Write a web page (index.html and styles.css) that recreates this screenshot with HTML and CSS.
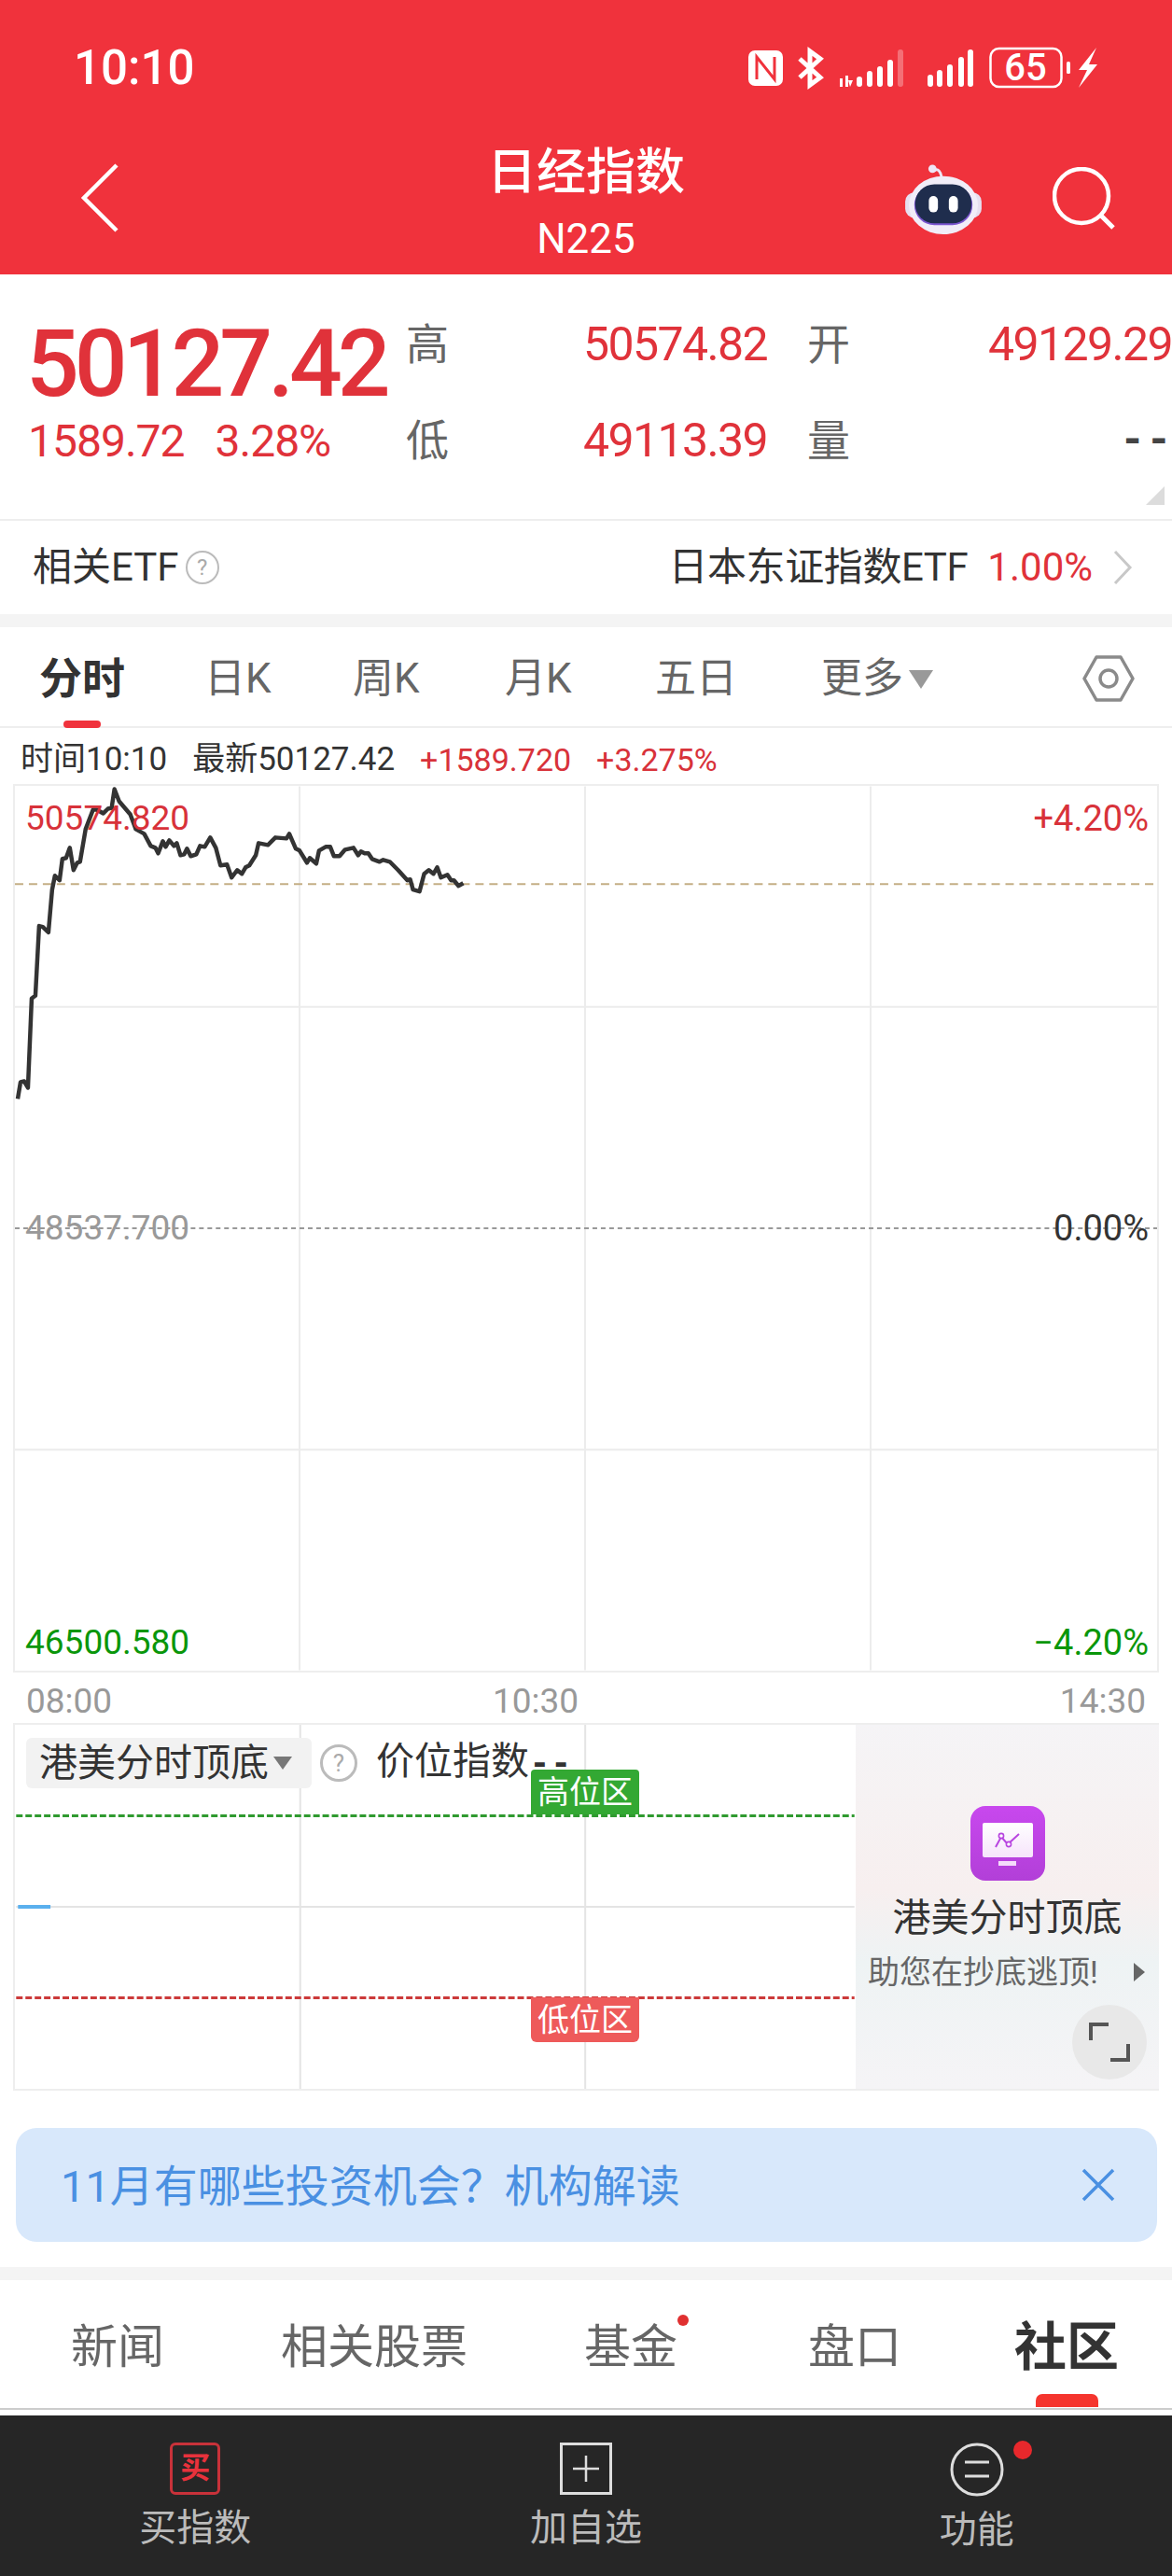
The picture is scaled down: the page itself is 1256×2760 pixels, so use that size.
FILE: index.html
```html
<!doctype html>
<html lang="zh-CN">
  <head>
    <meta charset="UTF-8" />
    <meta name="viewport" content="width=device-width, initial-scale=1.0" />
    <title>日经指数</title>
    <link rel="stylesheet" href="styles.css">
  </head>
  <body>
    <header class="top">
      <div class="status">
        <span class="clock">10:10</span>
        <svg class="status-icons" width="380" height="48" viewBox="800 48 380 48" fill="#fff">
          <!-- nfc -->
          <rect x="802" y="53" width="37" height="38" rx="7"/>
          <path d="M811 84V60L830 84V60" fill="none" stroke="#f0323c" stroke-width="3"/>
          <!-- bluetooth -->
          <path d="M857 62L879 82L868 90V54L879 62L857 82" fill="none" stroke="#fff" stroke-width="5"/>
          <!-- sim 1 -->
          <rect x="900" y="83" width="3" height="9"/><rect x="906" y="80" width="3" height="12"/><path d="M909 85h5l-3 7z"/>
          <rect x="918" y="81" width="6" height="11" rx="3"/>
          <rect x="929" y="75" width="6" height="17" rx="3"/>
          <rect x="940" y="70" width="6" height="22" rx="3"/>
          <rect x="951" y="63" width="6" height="29" rx="3"/>
          <rect x="962" y="52" width="6" height="40" rx="3" opacity=".3"/>
          <!-- sim 2 -->
          <rect x="994" y="79" width="6" height="13" rx="3"/>
          <rect x="1004" y="74" width="6" height="18" rx="3"/>
          <rect x="1015" y="68" width="6" height="24" rx="3"/>
          <rect x="1027" y="60" width="6" height="32" rx="3"/>
          <rect x="1037" y="52" width="6" height="40" rx="3"/>
          <!-- battery -->
          <rect x="1061.500" y="51" width="76" height="41" rx="9" fill="none" stroke="#fff" stroke-width="2.500"/>
          <text x="1099" y="85" class="battery-num" text-anchor="middle">65</text>
          <rect x="1143" y="65" width="4" height="13" rx="1.500"/>
          <path d="M1175 50L1156 74H1165L1156 93L1176 68H1167Z"/>
        </svg>
      </div>
      <nav class="nav">
        <svg class="back" width="44" height="76" viewBox="0 0 44 76"><path d="M40 3L5 38L40 73" fill="none" stroke="#fff" stroke-width="4.500"/></svg>
        <div class="title">
          <h1>日经指数</h1>
          <p>N225</p>
        </div>
        <div class="nav-right">
          <svg width="82" height="76" viewBox="0 0 84 78">
            <path d="M32 8c4-3 7 1 8 7" fill="none" stroke="#eee6f6" stroke-width="3"/>
            <circle cx="30" cy="6" r="4.500" fill="#eee6f6"/>
            <rect x="0" y="32" width="84" height="28" rx="10" fill="#e6dff0"/>
            <ellipse cx="42" cy="46" rx="38" ry="32" fill="#f1edf8"/>
            <rect x="10" y="24" width="64" height="44" rx="22" fill="#7a55cf"/>
            <rect x="11" y="23" width="62" height="43" rx="21" fill="#1f2d4d"/>
            <rect x="26" y="36" width="10" height="18" rx="5" fill="#fff"/>
            <rect x="48" y="36" width="10" height="18" rx="5" fill="#fff"/>
          </svg>
          <svg width="68" height="68" viewBox="0 0 68 68"><circle cx="31" cy="31" r="29" fill="none" stroke="#fff" stroke-width="4.500"/><path d="M52 52L65 65" stroke="#fff" stroke-width="5"/></svg>
        </div>
      </nav>
    </header>

    <section class="quote">
      <div class="price">
        <div class="price-big">50127.42</div>
        <div class="price-change"><span>1589.72</span><span>3.28%</span></div>
      </div>
      <dl class="stats">
        <dt>高</dt><dd>50574.82</dd>
        <dt>开</dt><dd>49129.29</dd>
        <dt>低</dt><dd>49113.39</dd>
        <dt>量</dt><dd class="stat-none">--</dd>
      </dl>
      <span class="corner"></span>
    </section>

    <section class="etf">
      <div class="etf-left">相关ETF<span class="help">?</span></div>
      <div class="etf-right">
        <span class="etf-name">日本东证指数ETF</span>
        <span class="etf-pct">1.00%</span>
        <svg width="22" height="38" viewBox="0 0 22 38"><path d="M3 2L19 19L3 36" fill="none" stroke="#c8c8c8" stroke-width="3"/></svg>
      </div>
    </section>

    <section class="periods">
      <span class="period active">分时</span>
      <span class="period">日K</span>
      <span class="period">周K</span>
      <span class="period">月K</span>
      <span class="period">五日</span>
      <span class="period">更多<i class="more-arrow"></i></span>
      <svg width="56" height="52" viewBox="0 0 56 52"><path d="M15 3H41L54 26L41 49H15L2 26Z" fill="none" stroke="#8a8a8a" stroke-width="3.500" stroke-linejoin="round"/><circle cx="28" cy="26" r="9" fill="none" stroke="#8a8a8a" stroke-width="3.500"/></svg>
    </section>

    <div class="info">
      <span>时间10:10</span>
      <span>最新50127.42</span>
      <span class="up">+1589.720</span>
      <span class="up">+3.275%</span>
    </div>

    <section class="chart">
      <svg class="plot" viewBox="14 842 1228 950">
        <g stroke="#ececec" stroke-width="2" fill="none">
          <path d="M320 842V1792M627 842V1792M934 842V1792"/>
          <path d="M14 1079H1242M14 1555H1242"/>
        </g>
        <path d="M14 1317H1242" stroke="#999" stroke-width="2" stroke-dasharray="5 4"/>
        <path d="M14 947H1242" stroke="#c4ae85" stroke-width="2" stroke-dasharray="9 6"/>
        <polyline fill="none" stroke="#333" stroke-width="4.500" stroke-linejoin="round" points="17,1178 20,1160 24,1159 28,1166 32,1070 36,1067 40,992 44,993 50,999 54,953 57,938 62,943 65,920 69,919 73,908 77,932 81,924 84,923 90,888 98,867 102,867 109,871 114,866 118,865 121,845 126,858 138,872 144,888 153,893 160,906 165,908 168,914 173,901 176,907 180,900 185,906 188,903 192,916 196,915 199,909 203,917 209,915 213,906 218,907 224,897 230,908 235,927 242,926 247,940 253,932 258,936 262,929 266,927 273,916 276,903 286,905 294,897 306,898 309,893 316,909 320,911 328,924 331,919 338,925 341,911 348,907 353,907 357,917 363,917 369,910 378,908 383,916 386,912 390,914 394,914 398,920 406,923 410,921 417,923 426,932 436,943 439,942 442,953 449,955 454,936 459,932 464,936 468,929 472,940 479,937 483,943 486,943 491,949 496,946"/>
      </svg>
      <div class="scale">
        <div class="scale-row up"><span>50574.820</span><span>+4.20%</span></div>
        <div class="scale-row"><span class="muted">48537.700</span><span>0.00%</span></div>
        <div class="scale-row down"><span>46500.580</span><span>−4.20%</span></div>
      </div>
    </section>

    <div class="axis"><span>08:00</span><span class="axis-mid">10:30</span><span>14:30</span></div>

    <section class="indicator">
      <div class="ind-plot">
        <svg class="plot" viewBox="14 1848 903 392">
          <path d="M320 1848V2240M627 1848V2240M14 2044H917" stroke="#e4e4e4" stroke-width="2" fill="none"/>
          <path d="M14 1946H917" stroke="#2f9a2f" stroke-width="3" stroke-dasharray="7 3"/>
          <path d="M14 2142H917" stroke="#cc3a3a" stroke-width="3" stroke-dasharray="7 3"/>
          <rect x="16" y="2042" width="35" height="4" fill="#5ab0ee"/>
        </svg>
        <div class="ind-head">
          <span class="chip">港美分时顶底<i class="chip-arrow"></i></span>
          <span class="help help-lg">?</span>
          <span class="ind-name">价位指数<span class="dashes">--</span></span>
        </div>
        <span class="zone zone-high">高位区</span>
        <span class="zone zone-low">低位区</span>
      </div>
      <aside class="promo">
        <div class="promo-icon">
          <div class="screen">
            <svg width="30" height="18" viewBox="0 0 30 18"><path d="M2 16L8 5L15 13L27 2" fill="none" stroke="#b845e0" stroke-width="2"/><circle cx="8" cy="4" r="2.600" fill="#fff" stroke="#b845e0" stroke-width="1.600"/><circle cx="16" cy="13" r="2.600" fill="#fff" stroke="#b845e0" stroke-width="1.600"/></svg>
          </div>
          <div class="stand"></div>
        </div>
        <div class="promo-title">港美分时顶底</div>
        <div class="promo-sub">助您在抄底逃顶!<i class="promo-arrow"></i></div>
        <div class="expand">
          <svg width="44" height="44" viewBox="0 0 44 44"><path d="M2 20V3H21M42 24V41H23" fill="none" stroke="#555" stroke-width="4"/></svg>
        </div>
      </aside>
    </section>

    <div class="banner">
      <span>11月有哪些投资机会？机构解读</span>
      <svg width="36" height="36" viewBox="0 0 36 36"><path d="M2 2L34 34M34 2L2 34" stroke="#4a90e2" stroke-width="3.500"/></svg>
    </div>

    <section class="detail-tabs">
      <span>新闻</span>
      <span>相关股票</span>
      <span class="has-dot">基金<i class="dot"></i></span>
      <span>盘口</span>
      <span class="active">社区</span>
    </section>

    <footer class="bottom">
      <div class="action">
        <span class="buy-icon">买</span>
        <span>买指数</span>
      </div>
      <div class="action">
        <svg width="56" height="56" viewBox="0 0 56 56"><rect x="1.500" y="1.500" width="53" height="53" fill="none" stroke="#ddd" stroke-width="3"/><path d="M28 14V42M14 28H42" stroke="#ddd" stroke-width="2.500"/></svg>
        <span>加自选</span>
      </div>
      <div class="action">
        <span class="menu-wrap">
          <svg width="58" height="58" viewBox="0 0 58 58"><circle cx="29" cy="29" r="27" fill="none" stroke="#ddd" stroke-width="3"/><path d="M16 21H42M16 36H42" stroke="#ddd" stroke-width="3"/></svg>
          <i class="menu-dot"></i>
        </span>
        <span>功能</span>
      </div>
    </footer>
  </body>
</html>
```

FILE: styles.css
```css
* {
    box-sizing: border-box;
    margin: 0;
    padding: 0;
}

body {
    width: 1256px;
    height: 2760px;
    overflow: hidden;
    background: #fff;
    color: #333;
    font-family: Roboto, "Noto Sans CJK SC", sans-serif;
}

i {
    font-style: normal;
}

.up {
    color: #d8323a;
}

.down {
    color: #0a960a;
}

.dashes {
    font-family: "Liberation Mono", monospace;
    font-size: 38px;
    font-weight: 700;
}

/* header */
.top {
    height: 294px;
    background: #f0323c;
    color: #fff;
}

.status {
    height: 146px;
    display: flex;
    justify-content: space-between;
    align-items: center;
    padding: 0 76px 0 79px;
}

.clock {
    font-weight: 500;
    font-size: 51px;
    line-height: 56px;
}

.status-icons {
    display: block;
}

.battery-num {
    font-size: 40px;
    font-weight: 500;
    fill: #fff;
}

.nav {
    height: 148px;
    display: grid;
    grid-template-columns: 1fr auto 1fr;
    align-items: center;
    padding: 0 60px;
}

.title {
    text-align: center;
    padding-bottom: 4px;
}

.title h1 {
    font-size: 53px;
    font-weight: 500;
    line-height: 66px;
    margin-bottom: 10px;
}

.title p {
    font-size: 44px;
    line-height: 56px;
}

.back {
    display: block;
    margin: 0 0 16px 25px;
}

.nav-right {
    display: flex;
    justify-content: flex-end;
    align-items: center;
    gap: 76px;
    margin-bottom: 14px;
}

/* quote */
.quote {
    position: relative;
    height: 262px;
    display: flex;
    padding-left: 28px;
    color: #e0323a;
    font-kerning: none;
}

.price {
    width: 407px;
    padding-top: 46px;
}

.price-big {
    font-weight: 500;
    font-size: 100px;
    letter-spacing: -5px;
    line-height: 100px;
}

.price-change {
    display: flex;
    gap: 33px;
    font-size: 48px;
    letter-spacing: -1px;
    line-height: 54px;
    margin: 6px 0 0 2px;
}

.stats {
    flex: 1;
    display: grid;
    grid-template-columns: 47px 340px 43px 47px 1fr;
    grid-auto-rows: 103px;
    align-items: center;
    padding-top: 23px;
    align-content: start;
}

.stats dt {
    font-size: 46px;
    line-height: 56px;
    color: #666;
}

.stats dd {
    font-size: 50px;
    letter-spacing: -1.600px;
    line-height: 56px;
    text-align: right;
}

.stats dt:nth-of-type(even) {
    grid-column: 4;
}

.stats dd.stat-none {
    font-family: "Liberation Mono", monospace;
    font-size: 47px;
    font-weight: 700;
    letter-spacing: 0;
    color: #444;
}

.corner {
    position: absolute;
    right: 8px;
    bottom: 15px;
    border-left: 20px solid transparent;
    border-bottom: 20px solid #dcdcdc;
}

/* etf row */
.etf {
    height: 116px;
    border-top: 2px solid #eee;
    border-bottom: 14px solid #f4f4f4;
    display: flex;
    justify-content: space-between;
    align-items: center;
    padding: 0 42px 0 35px;
    font-size: 42px;
    line-height: 56px;
}

.etf-left {
    display: flex;
    align-items: center;
}

.help {
    display: inline-flex;
    justify-content: center;
    align-items: center;
    width: 36px;
    height: 36px;
    margin-left: 7px;
    border: 2px solid #bbb;
    border-radius: 50%;
    color: #aaa;
    font-size: 24px;
    line-height: 1;
}

.etf-right {
    display: flex;
    align-items: center;
}

.etf-name {
    letter-spacing: -.4px;
}

.etf-pct {
    color: #e0323a;
    margin: 0 21px 0 21px;
}

.etf-right svg {
    display: block;
}

/* period tabs */
.periods {
    height: 108px;
    border-bottom: 2px solid #eee;
    display: grid;
    grid-template-columns: 177px 159px 163px 161px 178px 280px auto;
    align-items: center;
    padding: 4px 0 0 42px;
    font-size: 44px;
    line-height: 60px;
    color: #666;
}

.period {
    position: relative;
}

.period.active {
    font-weight: 700;
    font-size: 46px;
    color: #333;
}

.period.active::after {
    content: "";
    position: absolute;
    left: 26px;
    top: 75px;
    width: 40px;
    height: 8px;
    border-radius: 4px;
    background: #f0323c;
}

.more-arrow {
    display: inline-block;
    margin-left: 6px;
    border-left: 13px solid transparent;
    border-right: 13px solid transparent;
    border-top: 20px solid #999;
    vertical-align: 4px;
}

/* info row */
.info {
    height: 60px;
    display: flex;
    align-items: center;
    padding: 8px 0 0 22px;
    gap: 27px;
    font-size: 35px;
    line-height: 44px;
}

.info .up {
    font-size: 34px;
}

/* main chart */
.chart {
    position: relative;
    height: 952px;
    margin: 0 14px;
    border: 2px solid #eee;
}

.plot {
    position: absolute;
    left: 0;
    top: 0;
    width: 100%;
    height: 100%;
    display: block;
}

.scale {
    position: relative;
    height: 100%;
    padding: 13px 9px 0 11px;
    font-size: 37px;
    line-height: 44px;
}

.scale-row {
    display: flex;
    justify-content: space-between;
    margin-bottom: 395px;
}

.scale-row:nth-child(2) {
    margin-bottom: 400px;
}

.scale-row span:last-child {
    font-size: 38px;
}

.muted {
    color: #999;
}

/* time axis */
.axis {
    height: 54px;
    display: flex;
    justify-content: space-between;
    align-items: center;
    padding: 8px 28px 0 28px;
    font-size: 37px;
    line-height: 44px;
    color: #999;
}

.axis-mid {
    margin-right: 108px;
}

/* indicator */
.indicator {
    height: 394px;
    margin: 0 14px;
    display: flex;
    border: solid #eee;
    border-width: 2px 0 2px 2px;
}

.ind-plot {
    position: relative;
    flex: 1;
}

.ind-head {
    position: relative;
    display: flex;
    align-items: center;
    padding: 12px 0 0 12px;
}

.chip {
    display: flex;
    align-items: center;
    height: 54px;
    width: 306px;
    padding-left: 14px;
    background: #f2f2f2;
    border-radius: 6px;
    font-size: 41px;
    line-height: 54px;
}

.chip-arrow {
    margin-left: 5px;
    border-left: 10px solid transparent;
    border-right: 10px solid transparent;
    border-top: 14px solid #777;
}

.help-lg {
    width: 40px;
    height: 40px;
    margin-left: 9px;
    border-width: 3px;
    font-size: 26px;
}

.ind-name {
    margin-left: 20px;
    font-size: 41px;
    line-height: 54px;
    white-space: nowrap;
}

.zone {
    position: absolute;
    left: 553px;
    width: 116px;
    height: 48px;
    color: #fff;
    font-size: 34px;
    line-height: 48px;
    text-align: center;
}

.zone-high {
    top: 48px;
    background: #33a833;
    border-radius: 4px 4px 0 0;
}

.zone-low {
    top: 292px;
    background: #ee5a5a;
    border-radius: 0 0 6px 6px;
}

.promo {
    position: relative;
    width: 325px;
    background: linear-gradient(#f5f4f6 0%, #f7efef 45%, #eef3f4 65%, #f5f4f6 100%);
    text-align: center;
    padding-top: 87px;
}

.promo-icon {
    width: 80px;
    height: 80px;
    margin: 0 auto;
    padding-top: 18px;
    border-radius: 16px;
    background: linear-gradient(#c848ee, #b23fd8);
}

.screen {
    display: flex;
    justify-content: center;
    align-items: center;
    width: 54px;
    height: 37px;
    margin: 0 auto;
    border-radius: 2px;
    background: linear-gradient(#fff, #f6e4fb);
}

.stand {
    width: 19px;
    height: 5px;
    margin: 4px auto 0;
    background: #f4dcfa;
}

.promo-title {
    margin-top: 13px;
    font-size: 41px;
    line-height: 54px;
    color: #333;
}

.promo-sub {
    display: flex;
    align-items: center;
    margin-top: 6px;
    padding-left: 13px;
    font-size: 34px;
    line-height: 50px;
    color: #666;
    white-space: nowrap;
}

.promo-arrow {
    margin-left: 38px;
    border-top: 10px solid transparent;
    border-bottom: 10px solid transparent;
    border-left: 12px solid #666;
}

.expand {
    position: absolute;
    right: 13px;
    bottom: 10px;
    width: 80px;
    height: 80px;
    border-radius: 50%;
    background: #e8e8e8;
    display: flex;
    justify-content: center;
    align-items: center;
}

/* banner */
.banner {
    height: 122px;
    margin: 40px 16px 27px 17px;
    padding: 0 45px 0 48px;
    display: flex;
    justify-content: space-between;
    align-items: center;
    background: #d8e8fb;
    border-radius: 22px;
    color: #4a90e2;
    font-size: 47px;
    line-height: 60px;
}

.banner span {
    padding-top: 4px;
}

/* detail tabs */
.detail-tabs {
    position: relative;
    height: 153px;
    border-top: 14px solid #f4f4f4;
    border-bottom: 2px solid #ccc;
    display: flex;
    align-items: center;
    gap: 125px;
    padding: 6px 0 0 76px;
    font-size: 50px;
    line-height: 70px;
    color: #666;
}

.detail-tabs span {
    position: relative;
}

.detail-tabs .has-dot {
    margin-right: 15px;
}

.detail-tabs .active {
    margin-left: -4px;
    font-size: 56px;
    font-weight: 700;
    color: #333;
}

.detail-tabs .active::after {
    content: "";
    position: absolute;
    left: 23px;
    top: 85px;
    width: 67px;
    height: 14px;
    border-radius: 7px 7px 0 0;
    background: #f5352e;
}

.dot {
    position: absolute;
    right: -12px;
    top: 0;
    width: 12px;
    height: 12px;
    border-radius: 50%;
    background: #e03030;
}

/* bottom bar */
.bottom {
    height: 172px;
    margin-top: 6px;
    background: #262626;
    display: grid;
    grid-template-columns: repeat(3, 1fr);
    padding-top: 29px;
    color: #bbb;
    font-size: 40px;
    line-height: 54px;
    text-align: center;
}

.action {
    display: flex;
    flex-direction: column;
    align-items: center;
    gap: 9px;
}

.action svg {
    display: block;
}

.buy-icon {
    width: 54px;
    height: 56px;
    border: 3px solid #c8323a;
    border-radius: 6px;
    color: #e8323c;
    font-size: 32px;
    font-weight: 700;
    line-height: 48px;
}

.menu-wrap {
    position: relative;
}

.menu-dot {
    position: absolute;
    right: -30px;
    top: -2px;
    width: 20px;
    height: 20px;
    border-radius: 50%;
    background: #e8282c;
}
```
